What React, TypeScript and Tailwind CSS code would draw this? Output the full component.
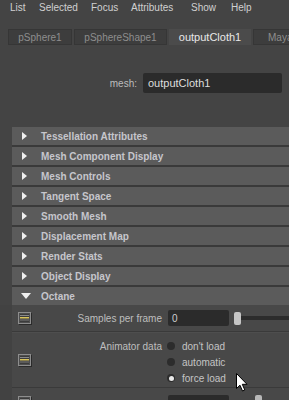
import React from "react";

const font = { fontFamily: '"Liberation Sans", Arial, sans-serif' };

function CollapseIcon() {
  return (
    <svg width="14" height="13" viewBox="0 0 14 13">
      <rect x="1" y="1" width="13" height="12" fill="#2a2a2a" />
      <rect x="0" y="0" width="13" height="12" fill="#8d8d8d" />
      <rect x="1" y="1" width="11" height="10" fill="#4e4e4e" />
      <rect x="2" y="2" width="9" height="8" fill="#3b3b3b" />
      <rect x="2" y="3" width="9" height="1" fill="#8a8a8a" />
      <rect x="2" y="5" width="9" height="1.5" fill="#d9c45a" />
      <rect x="2" y="7.5" width="9" height="1" fill="#7a7a7a" />
    </svg>
  );
}

function Header({ label, open }: { label: string; open?: boolean }) {
  return (
    <div className="h-[18px] bg-[#5b5b5b] flex items-center">
      <div className="w-[29px] flex justify-center items-center">
        {open ? (
          <svg width="10" height="6" viewBox="0 0 10 6" className="ml-[-2px]">
            <polygon points="0,0 10,0 5,6" fill="#f0f0f0" />
          </svg>
        ) : (
          <svg width="5" height="8" viewBox="0 0 5 8" className="ml-[-4px]">
            <polygon points="0,0 5,4 0,8" fill="#f0f0f0" />
          </svg>
        )}
      </div>
      <span className="text-[10px] font-bold text-[#c6c6cc] whitespace-nowrap">{label}</span>
    </div>
  );
}

function Radio({ label, checked }: { label: string; checked?: boolean }) {
  return (
    <div className="h-[16px] flex items-center">
      <div className="w-[8px] h-[8px] rounded-full bg-[#2c2c2c] flex items-center justify-center">
        {checked && <div className="w-[5px] h-[5px] rounded-full bg-[#e8e8e8]" />}
      </div>
      <span className="ml-[7px] text-[10px] text-[#c4c4c4] whitespace-nowrap">{label}</span>
    </div>
  );
}

export default function App() {
  const menu: [string, string][] = [
    ["List", "w-[29px]"],
    ["Selected", "w-[52px]"],
    ["Focus", "w-[40px]"],
    ["Attributes", "w-[60px]"],
    ["Show", "w-[40px]"],
    ["Help", "w-[40px]"],
  ];
  const headers = [
    "Tessellation Attributes",
    "Mesh Component Display",
    "Mesh Controls",
    "Tangent Space",
    "Smooth Mesh",
    "Displacement Map",
    "Render Stats",
    "Object Display",
  ];
  return (
    <div className="relative w-[289px] h-[400px] overflow-hidden bg-[#444444]" style={font}>
      {/* menu bar */}
      <div className="h-[14px] flex items-center pl-[10px] text-[10px] text-[#d0d0d0] whitespace-nowrap">
        {menu.map(([m, w]) => (
          <span key={m} className={`${w} shrink-0`}>
            {m}
          </span>
        ))}
      </div>

      {/* tabs */}
      <div className="mt-[15px] h-[16px] flex pl-[8px] gap-[2px] whitespace-nowrap">
        <div className="w-[64px] shrink-0 bg-[#3d3d3d] border border-[#363636] flex items-center justify-center text-[10px] text-[#8e8e8e]">
          pSphere1
        </div>
        <div className="w-[93px] shrink-0 bg-[#3d3d3d] border border-[#363636] flex items-center justify-center text-[10px] text-[#8e8e8e]">
          pSphereShape1
        </div>
        <div className="w-[82px] shrink-0 bg-[#4b4b4b] flex items-center justify-center text-[11px] text-[#e8e8e8]">
          outputCloth1
        </div>
        <div className="w-[60px] shrink-0 bg-[#3d3d3d] border border-[#363636] flex items-center pl-[14px] text-[10px] text-[#8e8e8e] overflow-hidden">
          MayaBase
        </div>
      </div>

      {/* mesh row */}
      <div className="mt-[28px] h-[20px] flex items-center">
        <span className="w-[137px] text-right text-[10px] text-[#bcbcbc]">mesh:</span>
        <div className="ml-[6px] w-[139px] h-[20px] bg-[#2b2b2b] rounded-[2px] flex items-center pl-[5px] text-[11px] text-[#dedede]">
          outputCloth1
        </div>
      </div>

      {/* sections */}
      <div className="mt-[34px] ml-[12px] flex flex-col gap-[2px] bg-[#3a3a3a]">
        {headers.map((h) => (
          <Header key={h} label={h} />
        ))}
        <Header label="Octane" open />
      </div>

      {/* octane content */}
      <div className="flex">
        <div className="w-[12px] shrink-0 bg-[#424242]" />
        <div className="flex-1 bg-[#484848]">
          {/* samples row */}
          <div className="h-[27px] flex items-center border-b border-[#3a3a3a]">
            <div className="w-[26px] shrink-0 pl-[6px] flex items-center">
              <CollapseIcon />
            </div>
            <span className="w-[124px] shrink-0 text-right text-[10px] text-[#bebebe] whitespace-nowrap">
              Samples per frame
            </span>
            <div className="ml-[6px] w-[61px] h-[16px] shrink-0 bg-[#2b2b2b] rounded-[2px] flex items-center pl-[4px] text-[10px] text-[#cfcfcf]">
              0
            </div>
            <div className="ml-[5px] w-[7px] h-[13px] shrink-0 rounded-[2px] bg-[#c6c6c6]" />
            <div className="flex-1 h-[4px] bg-[#2c2c2c]" />
          </div>

          {/* animator row */}
          <div className="h-[56px] flex border-b border-[#3a3a3a] border-t border-t-[#4e4e4e]">
            <div className="w-[26px] shrink-0 pl-[6px] flex items-center">
              <CollapseIcon />
            </div>
            <div className="w-[124px] shrink-0 pt-[5px]">
              <div className="h-[16px] flex items-center justify-end text-[10px] text-[#bebebe] whitespace-nowrap">
                Animator data
              </div>
            </div>
            <div className="ml-[5px] pt-[5px] flex flex-col">
              <Radio label="don't load" />
              <Radio label="automatic" />
              <Radio label="force load" checked />
            </div>
          </div>

          {/* next row (cut off) */}
          <div className="h-[30px] flex items-start pt-[7px]">
            <div className="w-[26px] shrink-0 pl-[6px] pt-[1px] flex">
              <CollapseIcon />
            </div>
            <div className="w-[124px] shrink-0" />
            <div className="ml-[6px] w-[61px] h-[16px] shrink-0 bg-[#2b2b2b] rounded-[2px]" />
            <div className="ml-[26px] w-[7px] h-[13px] shrink-0 rounded-[2px] bg-[#b8b8b8]" />
          </div>
        </div>
      </div>

      {/* mouse cursor */}
      <svg className="absolute left-[236px] top-[373px]" width="12" height="19" viewBox="0 0 12 19">
        <path
          d="M0.5,0.5 L0.5,15.5 L4,12.2 L6.5,18 L8.8,17 L6.3,11.3 L11,11.3 Z"
          fill="#ffffff"
          stroke="#000000"
          strokeWidth="1"
          strokeLinejoin="round"
        />
      </svg>
    </div>
  );
}
